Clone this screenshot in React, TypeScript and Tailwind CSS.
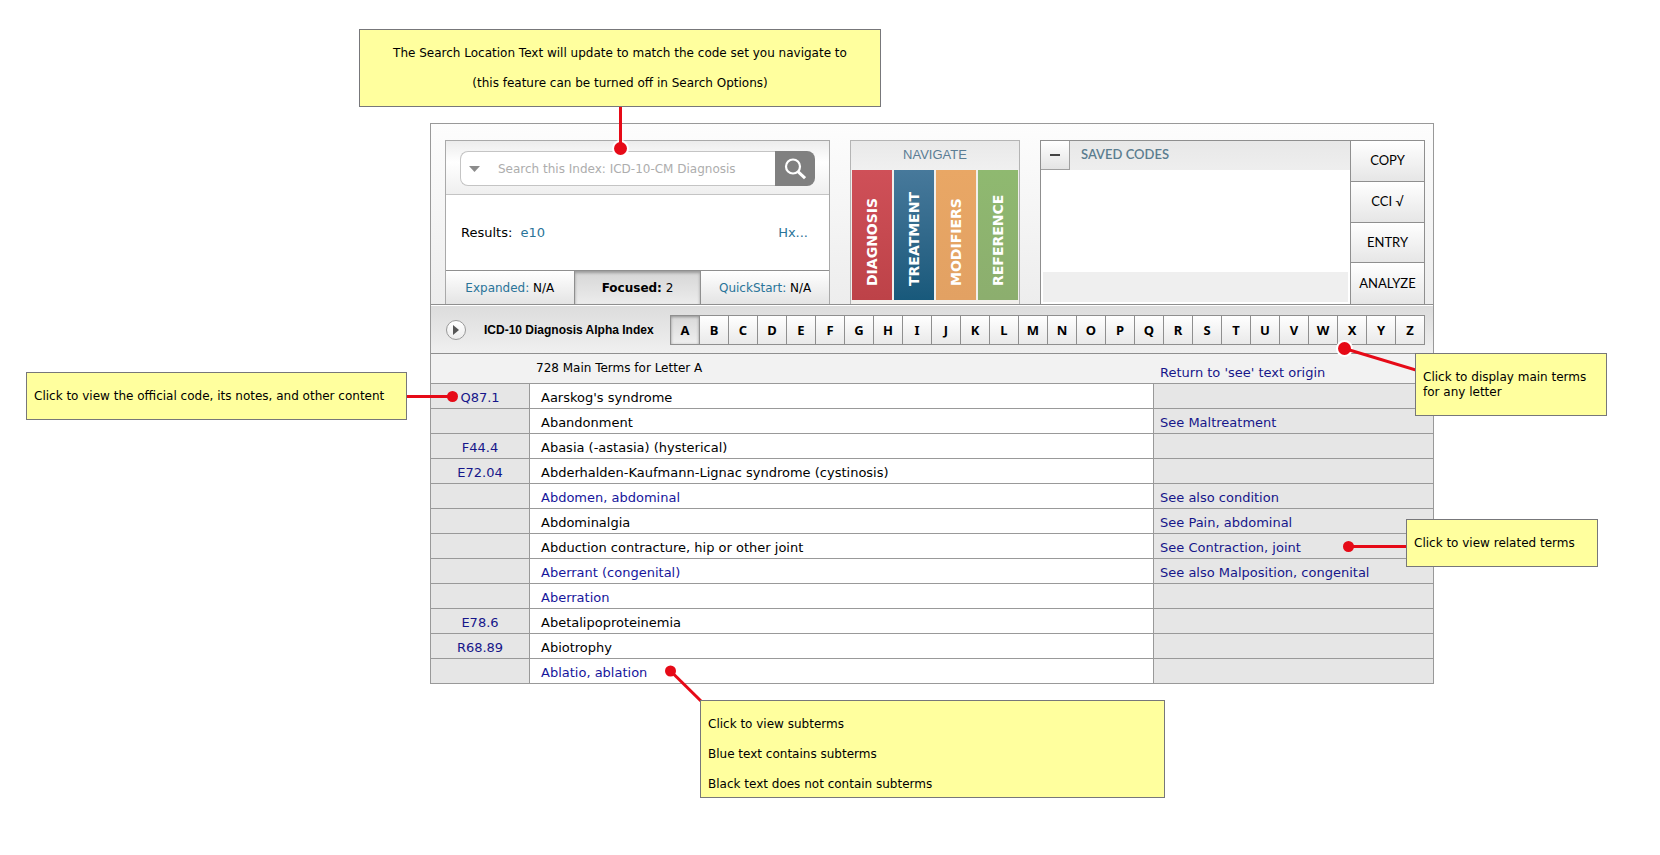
import type { ReactNode } from "react";

type Term = {
  code?: string;
  term: string;
  hasSubterms?: boolean;
  see?: string;
};

const TERMS: Term[] = [
  { code: "Q87.1", term: "Aarskog's syndrome" },
  { term: "Abandonment", see: "See Maltreatment" },
  { code: "F44.4", term: "Abasia (-astasia) (hysterical)" },
  { code: "E72.04", term: "Abderhalden-Kaufmann-Lignac syndrome (cystinosis)" },
  { term: "Abdomen, abdominal", hasSubterms: true, see: "See also condition" },
  { term: "Abdominalgia", see: "See Pain, abdominal" },
  { term: "Abduction contracture, hip or other joint", see: "See Contraction, joint" },
  { term: "Aberrant (congenital)", hasSubterms: true, see: "See also Malposition, congenital" },
  { term: "Aberration", hasSubterms: true },
  { code: "E78.6", term: "Abetalipoproteinemia" },
  { code: "R68.89", term: "Abiotrophy" },
  { term: "Ablatio, ablation", hasSubterms: true },
];

const LETTERS = "ABCDEFGHIJKLMNOPQRSTUVWXYZ".split("");

const SECTIONS = [
  { label: "DIAGNOSIS", color: "from-[#cf5058] to-[#bd4248]" },
  { label: "TREATMENT", color: "from-[#47799b] to-[#18597b]" },
  { label: "MODIFIERS", color: "from-[#e9a765] to-[#e2a163]" },
  { label: "REFERENCE", color: "from-[#8fb970] to-[#8cae6e]" },
];

const ACTIONS = ["COPY", "CCI √", "ENTRY", "ANALYZE"];

function SearchPanel() {
  return (
    <section className="flex w-[385px] shrink-0 flex-col border border-b-0 border-[#a9a9a9] bg-white">
      <div className="border-b border-[#c4c4c4] bg-linear-to-b from-[#ececec] via-white via-40% to-[#efefef] px-3.5 pt-2.5 pb-2">
        <form className="flex h-[35px]" onSubmit={(e) => e.preventDefault()}>
          <div className="flex flex-1 items-center rounded-l-lg border border-r-0 border-[#c4c4c4] bg-white pl-2">
            <button type="button" aria-label="Search options" className="w-[29px]">
              <svg width="11" height="6" viewBox="0 0 11 6" fill="#8c8c8c">
                <path d="M0 0h11L5.5 6z" />
              </svg>
            </button>
            <input
              type="text"
              aria-label="Search this index"
              placeholder="Search this Index: ICD-10-CM Diagnosis"
              className="min-w-0 flex-1 text-[12px] outline-none placeholder:text-[#adadad]"
            />
          </div>
          <button
            type="submit"
            aria-label="Search"
            className="flex w-10 items-center justify-center rounded-r-lg bg-[#808080]"
          >
            <svg width="22" height="22" viewBox="0 0 22 22" fill="none" stroke="white">
              <circle cx="9" cy="8.5" r="7" strokeWidth="2.2" />
              <path d="M14 13.6l7 6.6" strokeWidth="3" />
            </svg>
          </button>
        </form>
      </div>

      <div className="flex flex-1 items-center justify-between pr-[21px] pl-[15px] text-[13px] text-black">
        <p>
          Results:{" "}
          <a href="#e10" className="ml-1 text-[#2a7499]">
            e10
          </a>
        </p>
        <a href="#hx" className="text-[#2a7499]">
          Hx...
        </a>
      </div>

      <div className="grid h-[34px] grid-cols-3 border-t border-[#8f8f8f] text-[12px] text-black">
        <button type="button" className="bg-linear-to-b from-white to-[#e4e4e4]">
          <span className="text-[#2a7499]">Expanded:</span> N/A
        </button>
        <button
          type="button"
          className="border-x border-[#8f8f8f] bg-linear-to-b from-[#d6d6d6] to-[#ececec] shadow-[inset_0_2px_3px_#9a9a9a]"
        >
          <b>Focused:</b> 2
        </button>
        <button type="button" className="bg-linear-to-b from-white to-[#e4e4e4]">
          <span className="text-[#2a7499]">QuickStart:</span> N/A
        </button>
      </div>
    </section>
  );
}

function NavigatePanel() {
  return (
    <nav className="flex w-[170px] shrink-0 flex-col border border-b-0 border-[#b4b4b4] bg-[#f1efec]">
      <h2 className="flex h-[29px] items-center justify-center bg-linear-to-b from-[#e9e9e9] to-[#f0f0f0] pb-0.5 font-['Liberation_Sans',sans-serif] text-[13px] text-[#5b7d94]">
        NAVIGATE
      </h2>
      <div className="grid h-[130px] grid-cols-4 gap-0.5 px-px">
        {SECTIONS.map((s) => (
          <button
            key={s.label}
            type="button"
            className={`flex items-center justify-center bg-linear-to-b ${s.color}`}
          >
            <span className="h-[102px] rotate-180 text-left text-[14px] font-bold text-white [writing-mode:vertical-rl]">
              {s.label}
            </span>
          </button>
        ))}
      </div>
    </nav>
  );
}

function SavedCodes() {
  return (
    <section className="flex min-w-0 flex-1 border border-b-0 border-[#8f8f8f] bg-white font-[Lato,sans-serif] text-[13px]">
      <div className="flex min-w-0 flex-1 flex-col">
        <div className="flex h-[29px] bg-linear-to-b from-[#e8e8e8] to-[#eeeeee]">
          <button
            type="button"
            aria-label="Collapse saved codes"
            className="flex w-[29px] items-center justify-center border-r border-b border-[#a0a0a0] bg-linear-to-b from-white to-[#e4e4e4]"
          >
            <span className="h-0.5 w-2.5 bg-[#444]" />
          </button>
          <h2 className="self-center pb-0.5 pl-[11px] font-semibold text-[#5b7d8f]">SAVED CODES</h2>
        </div>
        <div className="mx-0.5 mt-auto mb-0.5 h-[30px] bg-[#efefef]" />
      </div>
      <div className="grid w-[74px] shrink-0 grid-rows-4 divide-y divide-[#8f8f8f] border-l border-[#8f8f8f]">
        {ACTIONS.map((a) => (
          <button
            key={a}
            type="button"
            className="bg-linear-to-b from-white to-[#e6e6e6] text-black"
          >
            {a}
          </button>
        ))}
      </div>
    </section>
  );
}

function LetterBar() {
  return (
    <div className="flex h-[49px] items-center border-t border-[#8f8f8f] bg-linear-to-b from-[#dcdcdc] to-[#f0f0f0] pt-0.5 pr-2 pl-[15px] shadow-[inset_0_1px_0_white]">
      <button
        type="button"
        aria-label="Show index options"
        className="flex size-5 shrink-0 items-center justify-center rounded-full border border-[#999] bg-linear-to-b from-white to-[#ececec]"
      >
        <svg width="6" height="10" viewBox="0 0 6 10" fill="#555">
          <path d="M0 0l6 5-6 5z" />
        </svg>
      </button>
      <h1 className="w-[204px] shrink-0 pl-[18px] font-['Liberation_Sans',sans-serif] text-[12px] font-bold whitespace-nowrap text-black">
        ICD-10 Diagnosis Alpha Index
      </h1>
      <div className="flex h-[30px] flex-1 divide-x divide-[#8f8f8f] border border-[#8f8f8f] font-['Noto_Sans',sans-serif] text-[13px] font-bold text-black">
        {LETTERS.map((l) => (
          <button
            key={l}
            type="button"
            aria-pressed={l === "A"}
            className={
              l === "A"
                ? "flex-1 bg-linear-to-b from-[#d9d9d9] to-[#efefef] pt-0.5 shadow-[inset_0_1px_3px_#8f8f8f]"
                : "flex-1 bg-linear-to-b from-white to-[#e9e9e9] pt-0.5"
            }
          >
            {l}
          </button>
        ))}
      </div>
    </div>
  );
}

function TermTable() {
  return (
    <table className="w-full table-fixed border-separate border-spacing-0 text-left text-[13px] leading-4 text-black">
      <colgroup>
        <col className="w-[98px]" />
        <col />
        <col className="w-[280px]" />
      </colgroup>
      <thead>
        <tr className="h-[30px] bg-[#f2f2f2]">
          <th className="border-t border-[#8f8f8f] p-0" aria-label="Code" />
          <th className="border-t border-[#8f8f8f] p-0 pb-0.5 pl-[7px] text-[12px] font-normal">
            728 Main Terms for Letter A
          </th>
          <th className="border-t border-[#8f8f8f] p-0 pt-2 pl-[7px] font-normal">
            <a href="#origin" className="text-[#16168a]">
              Return to 'see' text origin
            </a>
          </th>
        </tr>
      </thead>
      <tbody>
        {TERMS.map((t) => (
          <tr key={t.term} className="h-[25px]">
            <td className="border-t border-[#999] bg-[#e6e6e6] p-0 pt-1 text-center">
              {t.code && (
                <a href={`#${t.code}`} className="text-[#16168a]">
                  {t.code}
                </a>
              )}
            </td>
            <td className="border-t border-l border-[#999] bg-white p-0 pt-1 pl-[11px]">
              {t.hasSubterms ? (
                <a href="#subterms" className="text-[#16169c]">
                  {t.term}
                </a>
              ) : (
                t.term
              )}
            </td>
            <td className="border-t border-l border-[#999] bg-[#e6e6e6] p-0 pt-1 pl-1.5">
              {t.see && (
                <a href="#see" className="text-[#16168a]">
                  {t.see}
                </a>
              )}
            </td>
          </tr>
        ))}
      </tbody>
    </table>
  );
}

// Yellow help note pinned over the window
function Callout({ className, children }: { className: string; children: ReactNode }) {
  return (
    <aside
      className={`absolute flex flex-col gap-[15px] border border-[#77777a] bg-[#ffff9e] px-[7px] pt-4 text-[12px] leading-[15px] text-black ${className}`}
    >
      {children}
    </aside>
  );
}

function Leaders() {
  return (
    <>
      <svg className="absolute -top-4 left-[180px]" width="20" height="51" viewBox="0 0 20 51">
        <circle cx="10.5" cy="41.5" r="8.5" fill="white" />
        <circle cx="10.5" cy="41.5" r="6.5" fill="#e60a17" />
        <path d="M10.5 0v42" stroke="#e60a17" strokeWidth="3" />
      </svg>
      <svg className="absolute top-[264px] -left-[23px]" width="54" height="20" viewBox="0 0 54 20">
        <circle cx="45.5" cy="9.5" r="5.5" fill="#e60a17" />
        <path d="M0 9.5h45" stroke="#e60a17" strokeWidth="3" />
      </svg>
      <svg className="absolute top-[215px] right-[18px]" width="82" height="36" viewBox="0 0 82 36">
        <circle cx="10.5" cy="10.5" r="8.5" fill="white" />
        <circle cx="10.5" cy="10.5" r="6.5" fill="#e60a17" />
        <path d="M10.5 10.5L82 32" stroke="#e60a17" strokeWidth="3" />
      </svg>
      <svg className="absolute top-[413px] right-[27px]" width="67" height="20" viewBox="0 0 67 20">
        <circle cx="8.5" cy="10.5" r="5.5" fill="#e60a17" />
        <path d="M8.5 10.5H67" stroke="#e60a17" strokeWidth="3" />
      </svg>
      <svg className="absolute top-[538px] left-[230px]" width="44" height="42" viewBox="0 0 44 42">
        <circle cx="10.5" cy="10" r="5.5" fill="#e60a17" />
        <path d="M10.5 10L42 41" stroke="#e60a17" strokeWidth="3" />
      </svg>
    </>
  );
}

export default function App() {
  return (
    <main className="bg-white pt-[123px] pr-[226px] pb-[171px] pl-[430px] font-['DejaVu_Sans',sans-serif]">
      <div className="relative">
        <div className="border border-[#999]">
          <div className="flex h-[180px] gap-5 bg-linear-to-b from-[#fdfdfd] to-[#ededed] pt-4 pr-2 pl-3.5">
            <SearchPanel />
            <NavigatePanel />
            <SavedCodes />
          </div>
          <LetterBar />
          <TermTable />
        </div>

        <Leaders />
        <Callout className="-top-[94px] -left-[71px] h-[78px] w-[522px] text-center">
          <p>The Search Location Text will update to match the code set you navigate to</p>
          <p>(this feature can be turned off in Search Options)</p>
        </Callout>
        <Callout className="top-[249px] -left-[404px] h-12 w-[381px]">
          <p>Click to view the official code, its notes, and other content</p>
        </Callout>
        <Callout className="top-[230px] -right-[173px] h-[63px] w-48">
          <p>Click to display main terms for any letter</p>
        </Callout>
        <Callout className="top-[396px] -right-[164px] h-12 w-48">
          <p>Click to view related terms</p>
        </Callout>
        <Callout className="top-[577px] left-[270px] h-[98px] w-[465px]">
          <p>Click to view subterms</p>
          <p>Blue text contains subterms</p>
          <p>Black text does not contain subterms</p>
        </Callout>
      </div>
    </main>
  );
}
